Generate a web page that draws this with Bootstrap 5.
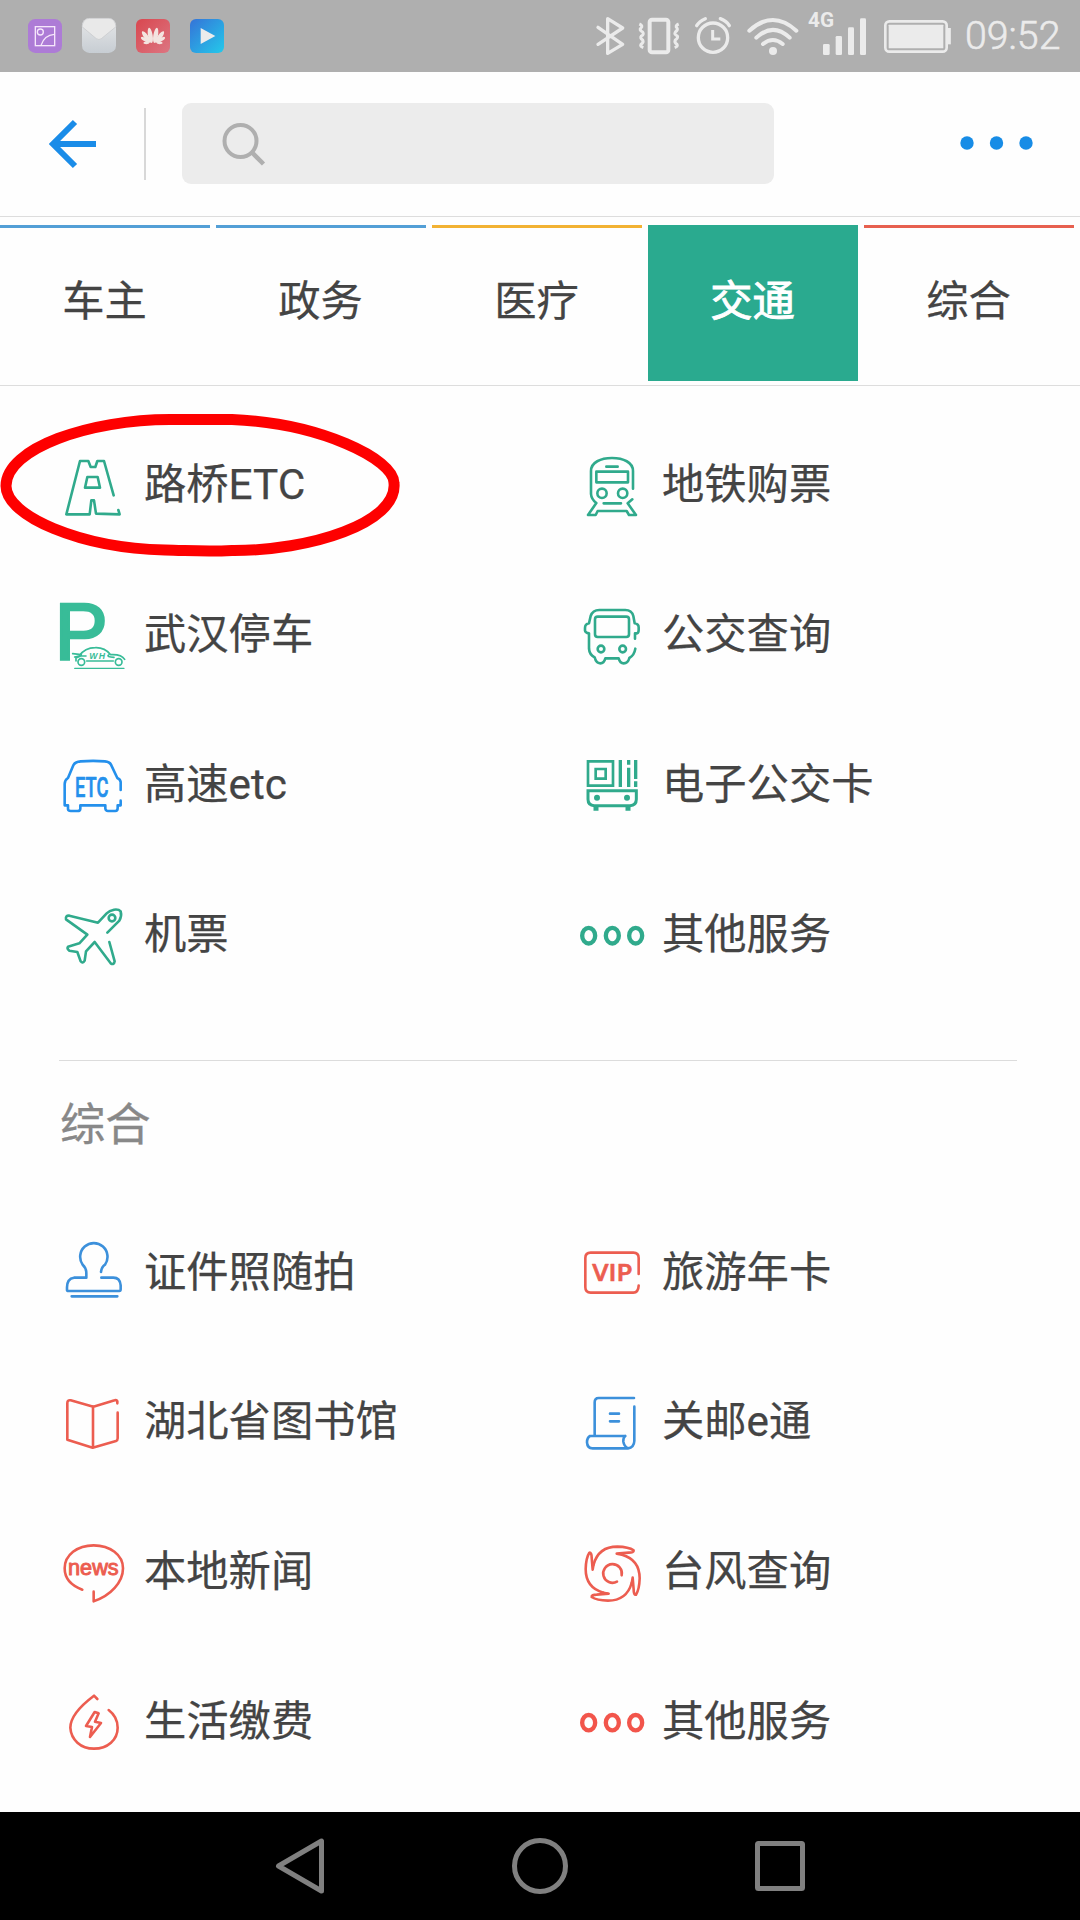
<!DOCTYPE html>
<html lang="zh-CN">
<head>
<meta charset="utf-8">
<meta name="viewport" content="width=device-width, initial-scale=1">
<title>城市服务</title>
<link href="https://cdn.jsdelivr.net/npm/bootstrap@5.3.0/dist/css/bootstrap.min.css" rel="stylesheet">
<style>
body{font-family:Roboto,"Noto Sans CJK SC",sans-serif;color:#444;background:#fefefe;width:1080px;height:1920px;overflow:hidden;font-size:42.3px;line-height:60px}
svg{display:block;flex:none;overflow:visible}
.status-bar{height:72px;background:#afafaf;color:#ebebeb;padding:0 17px 0 28px}
.app-tiles{gap:20px}
.sys-icons{gap:8px}
.clock{font-size:39.3px;font-weight:300;line-height:74px;width:99px;white-space:nowrap;padding-left:1px;-webkit-text-stroke:.6px currentColor}
.top-bar{height:145px;border-bottom:1px solid #ddd;padding:0 44px 0 48px}
.vline{width:2px;height:72px;background:#d8d8d8;margin-left:48px}
.search-box{width:592px;height:81px;border-radius:9px;background:#ececec;margin:-1px 0 0 36px;padding-left:40px}
.tab-strip{height:169px;border-bottom:1px solid #ddd;padding-top:8px;gap:6px}
.tab-item{width:210px;height:156px;border-top:3px solid #539fd6;padding:44px 1px 0 0;text-align:center;color:#444;text-decoration:none}
.tab-item,.lbl{-webkit-text-stroke:.25px currentColor}
.tab-amber{border-color:#f2b233}
.tab-red{border-color:#e7604f}
.tab-on{background:#2aaa8f;border-color:#2aaa8f;color:#fff;-webkit-text-stroke:.9px currentColor}
.service-list{padding-left:60px}
.service{width:519px;height:150px;gap:18px;flex:none}
.service:nth-child(even){width:420px;gap:17px}
.service span{margin-top:-3px;white-space:nowrap}
.service svg{width:66px;height:66px;fill:none;stroke:currentColor;stroke-width:7.8;stroke-linejoin:round;stroke-linecap:round}
.service svg text{fill:currentColor;stroke:none}
.green{color:#30aa8c}.blue{color:#3c90db}.red{color:#ec5d50}
.lbl{color:#444}
.list-a{padding-top:25px}
.group-rule{margin:49px 63px 0 59px;height:1px;background:#dcdcdc}
.group-title{font-size:45.3px;line-height:64px;color:#888;margin:33px 0 0 60px;-webkit-text-stroke:.3px currentColor}
.list-b{padding-top:43px}
.short .service{height:147px}
.marker{left:0;top:411px}
.nav-keys{height:108px;background:#000;gap:180px;margin-top:auto}
.nav-keys svg{fill:none;stroke:#808080;stroke-width:5;stroke-linejoin:round}
</style>
</head>
<body class="d-flex flex-column position-relative m-0">
<header class="status-bar d-flex flex-shrink-0 align-items-center justify-content-between">
  <div class="app-tiles d-flex">
    <svg width="34" height="34" viewBox="85 57 102 102"><rect x="85" y="57" width="102" height="102" rx="22" fill="#ad7bd6"/><g fill="none" stroke="#f6e6fb" stroke-width="4"><rect x="107" y="80" width="58" height="57"/><circle cx="122" cy="96" r="9"/><path d="M124 136Q134 105 164 103"/></g></svg>
    <svg width="34" height="34" viewBox="247 57 102 102"><defs><linearGradient id="gm" x2="0" y2="1"><stop stop-color="#e6e7e8"/><stop offset="1" stop-color="#c7cdd3"/></linearGradient></defs><rect x="247" y="55" width="102" height="104" rx="22" fill="url(#gm)"/><path d="M247 80Q250 55 270 55H328Q346 56 349 80L305 116Q298 121 290 116Z" fill="#e9e9e9" stroke="#c4c6c8" stroke-width="2"/></svg>
    <svg width="34" height="34" viewBox="409 57 102 102"><defs><linearGradient id="gh" x2="1" y2="1"><stop stop-color="#d9474f"/><stop offset="1" stop-color="#dc7682"/></linearGradient><g id="petals"><ellipse cx="452" cy="106" rx="7" ry="23" transform="rotate(-10 452 106)"/><ellipse cx="440" cy="111" rx="6.500" ry="21" transform="rotate(-36 440 111)"/><ellipse cx="436" cy="119" rx="5" ry="14" transform="rotate(-58 436 119)"/><ellipse cx="440" cy="129" rx="9" ry="3.500"/></g></defs><rect x="409" y="57" width="102" height="102" rx="18" fill="url(#gh)"/><g fill="#f3e4e0"><use href="#petals"/><use href="#petals" transform="translate(920) scale(-1 1)"/></g></svg>
    <svg width="34" height="34" viewBox="571 57 102 102"><defs><linearGradient id="gv" x2="1" y2="1"><stop stop-color="#3573d8"/><stop offset="1" stop-color="#24c9ea"/></linearGradient></defs><rect x="571" y="57" width="102" height="102" rx="18" fill="url(#gv)"/><path d="M603 84L647 108L603 132Z" fill="#ececec"/></svg>
  </div>
  <div class="sys-icons d-flex align-items-center">
    <svg width="34" height="40" viewBox="48 48 102 120" fill="none" stroke="currentColor" stroke-width="10" stroke-linejoin="round" stroke-linecap="round"><path d="M54 82L128 133L83 160V56L128 84L54 133"/></svg>
    <svg width="46" height="40" viewBox="174 48 138 120" fill="none" stroke="currentColor" stroke-width="12" stroke-linejoin="round"><rect x="209" y="59" width="56" height="98" rx="7"/><path stroke-width="9" d="M178 72Q190 77 183 84Q176 90 188 96Q193 103 184 108Q179 114 188 120Q192 128 183 133Q179 139 190 143M296 72Q284 77 291 84Q295 90 286 96Q281 103 292 108Q295 114 286 120Q282 128 291 133Q295 139 284 143"/></svg>
    <svg width="44" height="40" viewBox="336 48 132 120" fill="none" stroke="currentColor" stroke-width="10"><circle cx="399" cy="113" r="44"/><path stroke-width="9" d="M398 90V117H421"/><path stroke-width="10" stroke-linecap="round" d="M350 77Q358 64 376 56M421 56Q440 63 448 77"/></svg>
    <svg width="56" height="40" viewBox="492 48 168 120" fill="none" stroke="currentColor" stroke-width="12" stroke-linecap="round"><path d="M508 92Q579 28 649 92M529 113Q579 66 629 113M549 132Q579 108 608 132"/><circle cx="579" cy="153" r="12" fill="currentColor" stroke="none"/></svg>
    <svg width="68" height="40" viewBox="684 48 204 120" fill="currentColor"><text x="684" y="81" font-family="Roboto" font-weight="700" font-size="60" textLength="78" lengthAdjust="spacingAndGlyphs">4G</text><rect x="729" y="132" width="20" height="33" rx="4"/><rect x="767" y="108" width="19" height="57" rx="4"/><rect x="804" y="82" width="18" height="83" rx="4"/><rect x="840" y="55" width="18" height="110" rx="4"/></svg>
    <svg width="72" height="40" viewBox="912 51 216 120" fill="none" stroke="currentColor"><rect x="916" y="67" width="184" height="91" rx="12" stroke-width="8"/><rect x="926" y="77" width="164" height="71" rx="2" fill="currentColor" stroke="none"/><path d="M1108 87V136" stroke-width="9"/></svg>
    <span class="clock">09:52</span>
  </div>
</header>
<nav class="top-bar d-flex flex-shrink-0 align-items-center">
  <svg width="48" height="50" viewBox="0 0 48 50" fill="none" stroke="#1a8ce8" stroke-width="6"><path d="M27 3L5 25L27 47M6 25H48"/></svg>
  <div class="vline"></div>
  <div class="search-box d-flex align-items-center"><svg width="46" height="46" viewBox="0 0 46 46" fill="none" stroke="#afafaf" stroke-width="4"><circle cx="18.500" cy="20" r="16"/><path d="M30 31.500L41.500 43" stroke-width="4.500"/></svg></div>
  <svg class="ms-auto" width="75" height="16" viewBox="0 0 75 16" fill="#178ce6"><circle cx="6" cy="7" r="6.700"/><circle cx="35.500" cy="7" r="6.700"/><circle cx="65" cy="7" r="6.700"/></svg>
</nav>
<div class="tab-strip d-flex flex-shrink-0">
  <a class="tab-item">车主</a><a class="tab-item">政务</a><a class="tab-item tab-amber">医疗</a><a class="tab-item tab-on">交通</a><a class="tab-item tab-red">综合</a>
</div>
<main>
  <div class="service-list list-a d-flex flex-wrap">
    <div class="service d-flex align-items-center green"><svg viewBox="180 729 198 198"><path d="M341 856L312 753H292L286 771H272L265 753H240L199 913H269L274 871H282L288 911L359 913L355 900M262 801H293L300 833H255Z"/></svg><span class="lbl">路桥ETC</span></div>
    <div class="service d-flex align-items-center green"><svg viewBox="117 729 198 198"><path d="M279 836V783C279 757 250 744 216 744S153 757 153 783V852Q154 868 169 879L144 915H167L173 903H260L267 915H288L263 880L277 868M199 770H233M191 880H243"/><rect x="169" y="785" width="95" height="32"/><circle cx="186" cy="850" r="14"/><circle cx="248" cy="850" r="14"/></svg><span class="lbl">地铁购票</span></div>
    <div class="service d-flex align-items-center" style="color:#38bc98"><svg viewBox="60 69 198 198"><text x="44" y="236.500" font-family="Liberation Sans" font-size="238" style="stroke:currentColor;stroke-width:8;stroke-linejoin:miter">P</text><g stroke-width="5"><path d="M98 221L124 224M104 231L118 228Q134 203 166 203Q194 202 212 224Q244 222 254 238M140 243H220M108 243V234L122 228H138M206 225Q198 230 222 232"/><circle cx="124" cy="246" r="10"/><circle cx="236" cy="246" r="10"/><path d="M104 265H252" stroke-width="4"/></g><text x="148" y="236" font-family="Liberation Sans" font-style="italic" font-weight="700" font-size="26" textLength="47">WH</text></svg><span class="lbl">武汉停车</span></div>
    <div class="service d-flex align-items-center green"><svg viewBox="57 69 198 198"><path d="M225 176V160H231Q236 158 236 150V142Q236 132 224 130L220 108Q215 90 196 90H118Q98 90 92 108L87 130Q75 132 75 144V152Q76 159 87 160V206Q88 224 104 232Q108 250 121 250Q132 250 136 235H176Q180 250 191 250Q204 250 208 234Q223 226 226 206"/><rect x="105" y="110" width="102" height="61" rx="8"/><circle cx="123" cy="207" r="10"/><circle cx="188" cy="207" r="10"/></svg><span class="lbl">公交查询</span></div>
    <div class="service d-flex align-items-center" style="color:#2490ec"><svg viewBox="60 519 198 198"><path d="M242 630V606Q241 598 232 594L214 556Q210 545 195 544Q160 541 122 544Q105 545 100 556L84 594Q74 600 74 612V676H84V688Q85 693 92 693H112Q121 693 121 686V676H196V686Q197 693 204 693H226Q233 693 233 684V676H242V662"/><text x="105" y="651" font-family="Roboto" font-weight="500" font-size="84" textLength="100" lengthAdjust="spacingAndGlyphs" style="stroke:currentColor;stroke-width:2">ETC</text></svg><span class="lbl">高速etc</span></div>
    <div class="service d-flex align-items-center green"><svg viewBox="57 519 198 198"><g stroke-linecap="butt" stroke-linejoin="miter"><path stroke-width="8" d="M84 544H159V617H84ZM107 567H137V596H107Z"/><path stroke-width="10" d="M181 540V621M206 540V554M206 563V621M227 540V597M227 604V621"/><path stroke-width="9" d="M84 632H229V658Q229 677 210 677H103Q84 677 84 658Z"/><path stroke-width="15" d="M108 678V692M204 678V692"/></g><g fill="currentColor" stroke="none"><circle cx="111" cy="653" r="9"/><circle cx="201" cy="653" r="9"/></g></svg><span class="lbl">电子公交卡</span></div>
    <div class="service d-flex align-items-center green"><svg viewBox="60 969 198 198"><path d="M202 1058L238 1022Q246 1008 242 994Q236 987 222 989Q208 992 200 1000L174 1028L88 1007Q76 1006 78 1018L142 1064L118 1090L84 1100Q80 1106 88 1112L112 1116L122 1144Q128 1152 134 1142L138 1114L164 1086L212 1150Q222 1156 224 1144L208 1086"/><circle cx="216" cy="1014" r="10"/></svg><span class="lbl">机票</span></div>
    <div class="service d-flex align-items-center green"><svg viewBox="57 969 198 198" ><g stroke-width="13"><ellipse cx="86" cy="1067" rx="19.500" ry="23.500"/><ellipse cx="157" cy="1067" rx="19.500" ry="23.500"/><ellipse cx="227" cy="1067" rx="19.500" ry="23.500"/></g></svg><span class="lbl">其他服务</span></div>
  </div>
  <div class="group-rule"></div>
  <h2 class="group-title fw-normal">综合</h2>
  <div class="service-list list-b">
    <div class="short d-flex">
      <div class="service d-flex align-items-center blue"><svg viewBox="60 606 198 198"><path d="M183 696Q185 680 195 674A41 41 0 1 0 128 674Q139 684 139 700V713H102Q81 716 81 742V750Q81 753 86 753H238Q242 753 242 748V736Q240 713 220 713H184M95 769H232"/></svg><span class="lbl">证件照随拍</span></div>
      <div class="service d-flex align-items-center red"><svg viewBox="57 66 198 198"><path d="M236 162V114Q236 98 220 98H92Q76 98 76 114V202Q76 218 92 218H220Q235 218 236 197"/><text x="97" y="184" font-family="Open Sans" font-weight="600" font-size="71" textLength="121" lengthAdjust="spacingAndGlyphs" style="stroke:currentColor;stroke-width:2">VIP</text></svg><span class="lbl">旅游年卡</span></div>
    </div>
    <div class="d-flex flex-wrap">
      <div class="service d-flex align-items-center red"><svg viewBox="60 1047 198 198"><path d="M232 1087V1081Q230 1076 224 1078L160 1097L92 1078Q82 1076 82 1086V1196L158 1220L228 1200Q233 1198 233 1192V1115M159 1097V1220"/></svg><span class="lbl">湖北省图书馆</span></div>
      <div class="service d-flex align-items-center blue"><svg viewBox="57 507 198 198"><path d="M222 531H116Q104 531 104 544V644M196 645H90Q81 650 81 664Q82 682 98 682H204M196 645Q189 650 190 662Q192 676 204 682Q222 680 223 660V557M150 578H177M150 601H177"/></svg><span class="lbl">关邮e通</span></div>
      <div class="service d-flex align-items-center red"><svg viewBox="60 117 198 198"><path d="M127 266C94 254 74 231 74 202C74 162 112 133 161 133S249 162 249 202C249 244 212 284 161 301V272"/><text x="84" y="221" font-family="Liberation Sans" font-size="67" textLength="152" lengthAdjust="spacingAndGlyphs" style="stroke:currentColor;stroke-width:3">news</text></svg><span class="lbl">本地新闻</span></div>
      <div class="service d-flex align-items-center red"><svg viewBox="57 117 198 198"><defs><path id="blade" d="M101 190Q116 137 172 137Q206 138 221 148Q222 155 206 155L170 158Q178 159 186 161"/></defs><use href="#blade"/><use href="#blade" transform="rotate(90 158 218)"/><use href="#blade" transform="rotate(180 158 218)"/><use href="#blade" transform="rotate(270 158 218)"/><path d="M185 223A28 28 0 1 0 171 242"/></svg><span class="lbl">台风查询</span></div>
      <div class="service d-flex align-items-center red"><svg viewBox="60 567 198 198"><path d="M172 594L162 584C122 614 91 646 91 680C93 716 122 743 162 743C203 743 233 716 233 680C233 658 223 640 206 627M164 633L138 675L156 678L150 708L183 666L165 662L176 637Z"/></svg><span class="lbl">生活缴费</span></div>
      <div class="service d-flex align-items-center" style="color:#f2554b"><svg viewBox="57 567 198 198"><g stroke-width="13"><ellipse cx="86" cy="665" rx="19.500" ry="23"/><ellipse cx="157" cy="665" rx="19.500" ry="23"/><ellipse cx="227" cy="665" rx="19.500" ry="23"/></g></svg><span class="lbl">其他服务</span></div>
    </div>
  </div>
</main>
<footer class="nav-keys d-flex flex-shrink-0 align-items-center justify-content-center">
  <svg width="60" height="60" viewBox="0 0 60 60"><path d="M8.500 30L51.500 5V55Z"/></svg>
  <svg width="60" height="60" viewBox="0 0 60 60"><circle cx="30" cy="30" r="25.500"/></svg>
  <svg width="60" height="60" viewBox="0 0 60 60"><rect x="7.500" y="7.500" width="45" height="45" rx="1"/></svg>
</footer>
<svg class="marker position-absolute" width="406" height="150" viewBox="0 0 406 150" fill="none" stroke="#fe0000" stroke-width="11"><path d="M6 75C6 37 90 8.500 170 8.500H232C320 12 394 48 394 72C398 112 310 140 232 139.500C205 141 190 139.500 165 139C80 137 6 105 6 75Z"/></svg>
<script src="https://cdn.jsdelivr.net/npm/bootstrap@5.3.0/dist/js/bootstrap.bundle.min.js"></script>
</body>
</html>
